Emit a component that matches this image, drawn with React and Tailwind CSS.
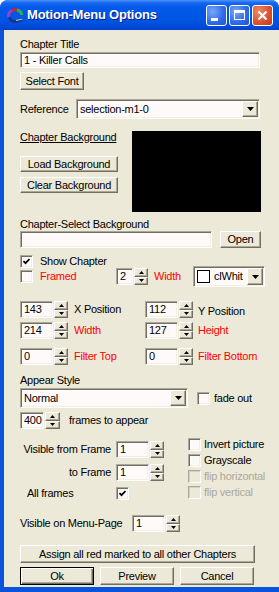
const sunken = 'border border-t-[#aca899] border-l-[#aca899] border-r-white border-b-white shadow-[inset_1px_1px_0_#716f64,inset_-1px_-1px_0_#f1efe2]'
const raised = 'bg-[#ece9d8] border border-t-white border-l-white border-r-[#716f64] border-b-[#716f64] shadow-[inset_-1px_-1px_0_#aca899]'

function Btn({ className = '', children }) {
  return <div className={`${raised} flex items-center justify-center leading-[13px] ${className}`}>{children}</div>
}

function Edit({ className = '', children }) {
  return (
    <div className={`${sunken} bg-[#fffafa] flex items-center pl-[3px] overflow-hidden leading-[13px] ${className}`}>
      {children}
    </div>
  )
}

function Tri({ up }) {
  return (
    <svg width="5" height="3" viewBox="0 0 5 3">
      {up ? <path d="M2.5 0L5 3H0z" fill="#000" /> : <path d="M0 0H5L2.5 3z" fill="#000" />}
    </svg>
  )
}

function Spin({ className = '' }) {
  return (
    <div className={`flex flex-col ${className}`}>
      <div className={`${raised} flex-1 flex items-center justify-center`}><Tri up /></div>
      <div className={`${raised} flex-1 flex items-center justify-center`}><Tri /></div>
    </div>
  )
}

function Arrow() {
  return (
    <svg width="7" height="4" viewBox="0 0 7 4">
      <path d="M0 0H7L3.5 4z" fill="#000" />
    </svg>
  )
}

function Combo({ className = '', children }) {
  return (
    <div className={`${sunken} bg-[#fffafa] flex p-[1px] ${className}`}>
      <div className="flex-1 flex items-center pl-[2px] overflow-hidden leading-[13px]">{children}</div>
      <div className={`${raised} w-[16px] shrink-0 flex items-center justify-center`}><Arrow /></div>
    </div>
  )
}

function Check({ checked, disabled }) {
  if (disabled) {
    return (
      <div className="w-[13px] h-[13px] shrink-0 bg-[#ece9d8] border border-t-[#aca899] border-l-[#aca899] border-r-white border-b-white shadow-[inset_1px_1px_0_#d4d0c8]" />
    )
  }
  return (
    <div className={`w-[13px] h-[13px] shrink-0 ${sunken} bg-[#fffafa] flex items-center justify-center`}>
      {checked && (
        <svg width="7" height="7" viewBox="0 0 7 7">
          <polyline points="0.5,3 2.5,5.2 6.5,1" fill="none" stroke="#000" strokeWidth="1.8" />
        </svg>
      )}
    </div>
  )
}

export default function App() {
  return (
    <div className="w-[279px] h-[592px] bg-[#0a53dd] rounded-t-[8px] flex flex-col font-['Liberation_Sans',Arial,sans-serif] text-[11px] tracking-[-0.25px] whitespace-nowrap text-black">
      {/* Title bar */}
      <div className="h-[30px] shrink-0 rounded-t-[8px] bg-[linear-gradient(to_bottom,#4a94fa_0px,#1566f0_3px,#0059e8_8px,#0055e3_20px,#004ad8_27px,#0040cc_30px)] flex items-center pl-[6px] pr-[6px]">
        <svg width="19" height="17" viewBox="0 0 19 17">
          <path d="M2.5 10 A6.5 6.5 0 0 1 6 3.5" fill="none" stroke="#a03cd0" strokeWidth="3" />
          <path d="M6 3.5 A6.5 6.5 0 0 1 11 3" fill="none" stroke="#d22" strokeWidth="3" />
          <path d="M11 3 A6.5 6.5 0 0 1 16 8" fill="none" stroke="#2bb34a" strokeWidth="3" />
          <path d="M3 10.5 Q6 16 12 14 L16.5 12" fill="none" stroke="#1b2f8a" strokeWidth="2.5" />
          <path d="M10 13.5 L16.5 12" fill="none" stroke="#c9c9c9" strokeWidth="1.2" />
        </svg>
        <div className="ml-[2px] text-white font-bold text-[13px] tracking-[-0.2px] [text-shadow:1px_1px_0_#0a1a8a]">Motion-Menu Options</div>
        <div className="ml-auto flex gap-[2px]">
          <div className="w-[21px] h-[21px] rounded-[3px] border border-white bg-[radial-gradient(circle_at_30%_30%,#7ba6f8,#2d69e8_60%,#1f55d8)] flex items-end pl-[4px] pb-[4px]">
            <div className="w-[7px] h-[3px] bg-white" />
          </div>
          <div className="w-[21px] h-[21px] rounded-[3px] border border-white bg-[radial-gradient(circle_at_30%_30%,#7ba6f8,#2d69e8_60%,#1f55d8)] flex items-center justify-center">
            <div className="w-[11px] h-[10px] border border-white border-t-[3px]" />
          </div>
          <div className="w-[21px] h-[21px] rounded-[3px] border border-white bg-[radial-gradient(circle_at_30%_30%,#f08a6a,#dc4f2a_60%,#c33b17)] flex items-center justify-center">
            <svg width="11" height="11" viewBox="0 0 11 11">
              <path d="M1.5 1.5L9.5 9.5M9.5 1.5L1.5 9.5" stroke="#fff" strokeWidth="2.2" />
            </svg>
          </div>
        </div>
      </div>

      {/* Client */}
      <div className="flex-1 px-[4px] pb-[5px] flex">
        <div className="flex-1 bg-[#ece9d8] pl-[16px] pr-[15px] pt-[8px] flex flex-col">
          <div className="h-[13px] leading-[13px]">Chapter Title</div>
          <Edit className="mt-[1px] h-[16px] w-[240px]">1 - Killer Calls</Edit>
          <Btn className="mt-[4px] h-[18px] w-[64px]">Select Font</Btn>

          <div className="mt-[9px] h-[20px] flex items-center">
            <div className="w-[56px]">Reference</div>
            <Combo className="h-[20px] w-[184px]">selection-m1-0</Combo>
          </div>

          <div className="mt-[12px] flex">
            <div className="w-[98px] flex flex-col">
              <div className="h-[13px] leading-[13px] underline underline-offset-[1px]">Chapter Background</div>
              <Btn className="mt-[12px] h-[16px]">Load Background</Btn>
              <Btn className="mt-[5px] h-[16px]">Clear Background</Btn>
            </div>
            <div className="ml-[14px] w-[129px] h-[81px] bg-black" />
          </div>

          <div className="mt-[6px] h-[13px] leading-[13px]">Chapter-Select Background</div>
          <div className="h-[17px] flex">
            <Edit className="w-[192px]" />
            <Btn className="ml-[8px] w-[41px]">Open</Btn>
          </div>

          <div className="mt-[7px] h-[13px] flex items-center">
            <Check checked />
            <div className="ml-[7px]">Show Chapter</div>
          </div>

          <div className="mt-[-2px] h-[21px] flex items-center">
            <div className="w-[96px] flex items-center">
              <Check />
              <div className="ml-[7px] text-[#ff0000]">Framed</div>
            </div>
            <Edit className="w-[17px] h-[17px]">2</Edit>
            <Spin className="ml-[1px] w-[14px] h-[17px]" />
            <div className="ml-[6px] text-[#ff0000]">Width</div>
            <Combo className="ml-auto h-[21px] w-[72px]">
              <div className="w-[13px] h-[13px] border border-black bg-white mr-[4px] shrink-0" />
              clWhit
            </Combo>
          </div>

          <div className="mt-[14px] flex flex-col gap-[4px]">
            {[
              ['143', 'X Position', '112', 'Y Position', false, ''],
              ['214', 'Width', '127', 'Height', true, ''],
              ['0', 'Filter Top', '0', 'Filter Bottom', true, 'mt-[5px]'],
            ].map(([a, la, b, lb, red, extra]) => (
              <div key={la} className={`h-[17px] flex ${extra}`}>
                <div className="w-[125px] flex items-center">
                  <Edit className="w-[33px] h-[17px]">{a}</Edit>
                  <Spin className="ml-[1px] w-[14px] h-[17px]" />
                  <div className={`ml-[6px] ${red ? 'text-[#ff0000]' : ''}`}>{la}</div>
                </div>
                <div className="flex items-center">
                  <Edit className="w-[33px] h-[17px]">{b}</Edit>
                  <Spin className="ml-[1px] w-[14px] h-[17px]" />
                  <div className={`ml-[5px] ${red ? 'text-[#ff0000]' : 'mt-[3px]'}`}>{lb}</div>
                </div>
              </div>
            ))}
          </div>

          <div className="mt-[9px] h-[13px] leading-[13px]">Appear Style</div>
          <div className="mt-[1px] h-[20px] flex items-center">
            <Combo className="h-[20px] w-[168px]">Normal</Combo>
            <div className="ml-[9px]"><Check /></div>
            <div className="ml-[4px]">fade out</div>
          </div>

          <div className="mt-[4px] h-[17px] flex items-center">
            <Edit className="w-[24px] h-[17px]">400</Edit>
            <Spin className="ml-[1px] w-[15px] h-[17px]" />
            <div className="ml-[9px]">frames to appear</div>
          </div>

          <div className="mt-[9px] flex">
            <div className="w-[168px] pt-[3px] flex flex-col">
              <div className="h-[17px] flex items-center">
                <div className="w-[96px] pr-[5px] text-right">Visible from Frame</div>
                <Edit className="w-[33px] h-[17px]">1</Edit>
                <Spin className="ml-[1px] w-[14px] h-[17px]" />
              </div>
              <div className="mt-[6px] h-[17px] flex items-center">
                <div className="w-[96px] pr-[5px] text-right">to Frame</div>
                <Edit className="w-[33px] h-[17px]">1</Edit>
                <Spin className="ml-[1px] w-[14px] h-[17px]" />
              </div>
              <div className="mt-[6px] h-[13px] flex items-center">
                <div className="w-[96px] pl-[7px]">All frames</div>
                <Check checked />
              </div>
            </div>
            <div className="flex flex-col gap-[3px]">
              {[
                ['Invert picture', false],
                ['Grayscale', false],
                ['flip horizontal', true],
                ['flip vertical', true],
              ].map(([t, d]) => (
                <div key={t} className="h-[13px] flex items-center">
                  <Check disabled={d} />
                  <div className={`ml-[3px] ${d ? 'text-[#aca899]' : ''}`}>{t}</div>
                </div>
              ))}
            </div>
          </div>

          <div className="mt-[15px] h-[17px] flex items-center">
            <div className="w-[112px]">Visible on Menu-Page</div>
            <Edit className="w-[33px] h-[17px]">1</Edit>
            <Spin className="ml-[1px] w-[14px] h-[17px]" />
          </div>

          <Btn className="mt-[13px] h-[18px] w-[235px]">Assign all red marked to all other Chapters</Btn>
          <div className="mt-[4px] h-[18px] flex gap-[6px]">
            <div className="w-[74px] border border-black flex">
              <div className="flex-1 bg-[#ece9d8] flex items-center justify-center shadow-[inset_1px_1px_0_#fff,inset_-1px_-1px_0_#716f64,inset_-2px_-2px_0_#aca899]">Ok</div>
            </div>
            <Btn className="w-[74px]">Preview</Btn>
            <Btn className="w-[74px]">Cancel</Btn>
          </div>
        </div>
      </div>
    </div>
  )
}
